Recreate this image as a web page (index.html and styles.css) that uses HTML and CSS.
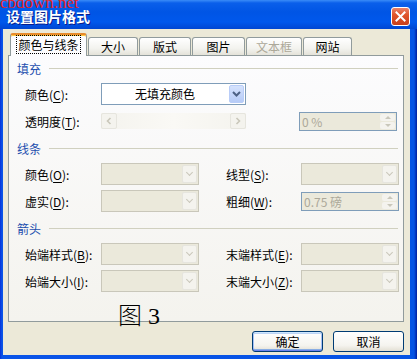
FILE: index.html
```html
<!DOCTYPE html>
<html lang="zh-CN">
<head>
  <meta charset="UTF-8">
  <title>设置图片格式</title>
  <link rel="stylesheet" href="styles.css">
</head>
<body>
  <div class="window">
    <div class="titlebar">
      <span class="watermark">cbdown.net</span>
      <span class="title">设置图片格式</span>
      <span class="close">
        <svg width="19" height="19" viewBox="0 0 19 19">
          <path d="M5 5 L14 14 M14 5 L5 14" stroke="#fff" stroke-width="2.2" stroke-linecap="square"/>
        </svg>
      </span>
    </div>

    <div class="content">
      <div class="tabs">
        <div class="tab active"><span class="focus">颜色与线条</span></div>
        <div class="tab t-size">大小</div>
        <div class="tab t-layout">版式</div>
        <div class="tab t-pic">图片</div>
        <div class="tab t-box disabled">文本框</div>
        <div class="tab t-web">网站</div>
      </div>

      <div class="panel">
        <div class="group first"><span>填充</span></div>
        <div class="row">
          <span class="label">颜色(<u>C</u>):</span>
          <div class="combo wide">
            <span class="value">无填充颜色</span>
            <span class="arrow">
              <svg width="9" height="6" viewBox="0 0 9 6"><path d="M1 1 L4.5 4.5 L8 1" fill="none" stroke="#4d6185" stroke-width="2"/></svg>
            </span>
          </div>
        </div>
        <div class="row">
          <span class="label">透明度(<u>T</u>):</span>
          <div class="scroll">
            <span class="sbtn">
              <svg width="6" height="8" viewBox="0 0 6 8"><path d="M4.5 1 L1.5 4 L4.5 7" fill="none" stroke="#c9c7ba" stroke-width="1.6"/></svg>
            </span>
            <span class="track"></span>
            <span class="sbtn">
              <svg width="6" height="8" viewBox="0 0 6 8"><path d="M1.5 1 L4.5 4 L1.5 7" fill="none" stroke="#c9c7ba" stroke-width="1.6"/></svg>
            </span>
          </div>
          <div class="spin pct">
            <span class="value">0 %</span>
            <span class="spinbtns"><span class="up"></span><span class="down"></span></span>
          </div>
        </div>

        <div class="group"><span>线条</span></div>
        <div class="row">
          <span class="label">颜色(<u>O</u>):</span>
          <div class="combo off"><span class="value"></span><span class="arrow"></span></div>
          <span class="label right">线型(<u>S</u>):</span>
          <div class="combo off"><span class="value"></span><span class="arrow"></span></div>
        </div>
        <div class="row">
          <span class="label">虚实(<u>D</u>):</span>
          <div class="combo off"><span class="value"></span><span class="arrow"></span></div>
          <span class="label right">粗细(<u>W</u>):</span>
          <div class="spin">
            <span class="value">0.75 磅</span>
            <span class="spinbtns"><span class="up"></span><span class="down"></span></span>
          </div>
        </div>

        <div class="group"><span>箭头</span></div>
        <div class="row">
          <span class="label">始端样式(<u>B</u>):</span>
          <div class="combo off"><span class="value"></span><span class="arrow"></span></div>
          <span class="label right">末端样式(<u>E</u>):</span>
          <div class="combo off"><span class="value"></span><span class="arrow"></span></div>
        </div>
        <div class="row">
          <span class="label">始端大小(<u>I</u>):</span>
          <div class="combo off"><span class="value"></span><span class="arrow"></span></div>
          <span class="label right">末端大小(<u>Z</u>):</span>
          <div class="combo off"><span class="value"></span><span class="arrow"></span></div>
        </div>
      </div>

      <div class="fig">图 3</div>

      <div class="buttons">
        <button class="btn default">确定</button>
        <button class="btn">取消</button>
      </div>
    </div>
  </div>
</body>
</html>
```

FILE: styles.css
```css
body {
  margin: 0;
  font-family: "Noto Sans CJK SC", sans-serif;
  font-size: 12px;
  color: #000;
}
.window {
  width: 417px;
  height: 359px;
  background: linear-gradient(to right, #0831d9, #0a54e8 2px, #0553e4 calc(100% - 3px), #001ea0);
  display: flex;
  flex-direction: column;
  overflow: hidden;
}
.titlebar {
  position: relative;
  height: 29px;
  flex: none;
  background: linear-gradient(to bottom, #3a8cf8 0, #0a5fea 3px, #0055e5 12px, #0058ec 22px, #0046d2 29px);
}
.watermark {
  position: absolute;
  left: 0;
  top: -6px;
  font-family: "Liberation Serif", serif;
  font-size: 17px;
  line-height: 17px;
  color: #e8231f;
}
.title {
  position: absolute;
  left: 6px;
  top: 7px;
  font-size: 14px;
  line-height: 18px;
  font-weight: bold;
  color: #fff;
  text-shadow: 1px 1px #0a1e8c;
}
.close {
  position: absolute;
  right: 7px;
  top: 7px;
  width: 19px;
  height: 19px;
  box-sizing: border-box;
  border: 1px solid #fff;
  border-radius: 3px;
  background: linear-gradient(to bottom, #e8826a, #e0552b 40%, #c9401b);
  display: flex;
  align-items: center;
  justify-content: center;
}
.content {
  position: relative;
  flex: 1;
  margin: 0 7px 4px 3px;
  background: #ece9d8;
  padding: 4px 6px 0 5px;
}
.tabs {
  display: flex;
  align-items: flex-end;
  height: 22px;
  padding-left: 2px;
}
.tab {
  height: 18px;
  box-sizing: border-box;
  margin-left: 1px;
  border: 1px solid #919b9c;
  border-bottom: none;
  border-radius: 3px 3px 0 0;
  background: linear-gradient(to bottom, #fff, #f3f3ef 60%, #e4e2d9);
  text-align: center;
  line-height: 17px;
}
.tab.active {
  margin-left: 0;
  width: 77px;
  height: 23px;
  margin-bottom: -1px;
  position: relative;
  z-index: 1;
  background: #fcfcfe;
  border-top: 2px solid #e68b2c;
  box-shadow: inset 0 1px #ffc83c;
  line-height: 19px;
}
.focus {
  outline: 1px dotted #000;
  outline-offset: 0;
  padding: 0 1px;
}
.t-size { width: 50px; }
.t-layout { width: 52px; }
.t-pic { width: 53px; }
.t-box { width: 56px; }
.t-web { width: 49px; }
.tab.disabled { color: #aca899; }
.panel {
  height: 267px;
  box-sizing: border-box;
  border: 1px solid #919b9c;
  background: linear-gradient(to bottom, #fcfcfe, #f4f3ee);
  padding: 0 5px 0 8px;
}
.group {
  display: flex;
  align-items: center;
  height: 16px;
  margin-top: 8px;
  margin-bottom: 7px;
  color: #1d4fae;
}
.group.first { margin-top: 4px; }
.group::after {
  content: "";
  flex: 1;
  height: 1px;
  margin-left: 8px;
  background: #d0d0bf;
}
.row {
  display: flex;
  align-items: center;
  height: 22px;
  margin-bottom: 5px;
  padding-left: 8px;
}
.label {
  width: 76px;
  flex: none;
  white-space: nowrap;
}
.label.right {
  width: 75px;
  margin-left: 27px;
}
u { text-decoration-thickness: 1px; text-underline-offset: 2px; }
.combo {
  display: flex;
  width: 98px;
  height: 22px;
  box-sizing: border-box;
  border: 1px solid #7f9db9;
  background: #fff;
  flex: none;
}
.combo.wide { width: 145px; }
.combo .value {
  flex: 1;
  text-align: center;
  line-height: 20px;
}
.combo .arrow {
  width: 15px;
  margin: 1px;
  box-sizing: border-box;
  border: 1px solid #b9cdf8;
  border-radius: 2px;
  background: linear-gradient(to bottom, #d5e2fd, #b6cbf7);
  display: flex;
  align-items: center;
  justify-content: center;
}
.combo.off {
  border-color: #c9c7ba;
  background: #ebe9db;
}
.combo.off .arrow {
  border-color: #e6e5de;
  background: #f4f3ee;
  position: relative;
}
.combo.off .arrow::after {
  content: "";
  width: 4px;
  height: 4px;
  margin-top: -3px;
  border-right: 1.5px solid #c9c7ba;
  border-bottom: 1.5px solid #c9c7ba;
  transform: rotate(45deg);
}
.scroll {
  display: flex;
  width: 145px;
  height: 16px;
  flex: none;
  background: linear-gradient(to right, #f4f3ee, #faf9f5 50%, #f4f3ee);
}
.scroll .track { flex: 1; }
.sbtn {
  width: 16px;
  box-sizing: border-box;
  border: 1px solid #e6e5de;
  border-radius: 2px;
  background: #f4f3ee;
  display: flex;
  align-items: center;
  justify-content: center;
}
.spin {
  display: flex;
  width: 98px;
  height: 19px;
  box-sizing: border-box;
  border: 1px solid #7f9db9;
  background: #ebe9db;
  color: #aca899;
  flex: none;
}
.spin.pct { margin-left: 53px; }
.spin .value {
  flex: 1;
  line-height: 17px;
  padding-left: 2px;
}
.spinbtns {
  width: 15px;
  margin: 1px;
  display: flex;
  flex-direction: column;
  gap: 1px;
}
.spinbtns span {
  flex: 1;
  background: #f4f3ee;
  border-radius: 2px;
  display: flex;
  align-items: center;
  justify-content: center;
}
.spinbtns .up::after,
.spinbtns .down::after {
  content: "";
  border-left: 3px solid transparent;
  border-right: 3px solid transparent;
}
.spinbtns .up::after { border-bottom: 3px solid #c9c7ba; }
.spinbtns .down::after { border-top: 3px solid #c9c7ba; }
.fig {
  position: absolute;
  left: 115px;
  top: 272px;
  font-family: "Liberation Serif", "Noto Sans CJK SC", serif;
  font-size: 24px;
  font-weight: 300;
  line-height: 30px;
  color: #000;
}
.buttons {
  display: flex;
  justify-content: flex-end;
  gap: 10px;
  margin-top: 9px;
  padding-right: 0;
}
.btn {
  width: 71px;
  height: 21px;
  padding: 0;
  border: 1px solid #003c74;
  border-radius: 3px;
  background: linear-gradient(to bottom, #fff, #f5f4ef 70%, #e3e0d4);
  font-family: "Noto Sans CJK SC", sans-serif;
  font-size: 12px;
  line-height: 17px;
  color: #000;
}
.btn.default {
  box-shadow: inset 0 1px #cee7ff, inset 0 -1px #6982ee, inset 1px 0 #a6c1f5, inset -1px 0 #a6c1f5, inset 0 2px #bcd4f6, inset 0 -2px #89ade4;
}
```
